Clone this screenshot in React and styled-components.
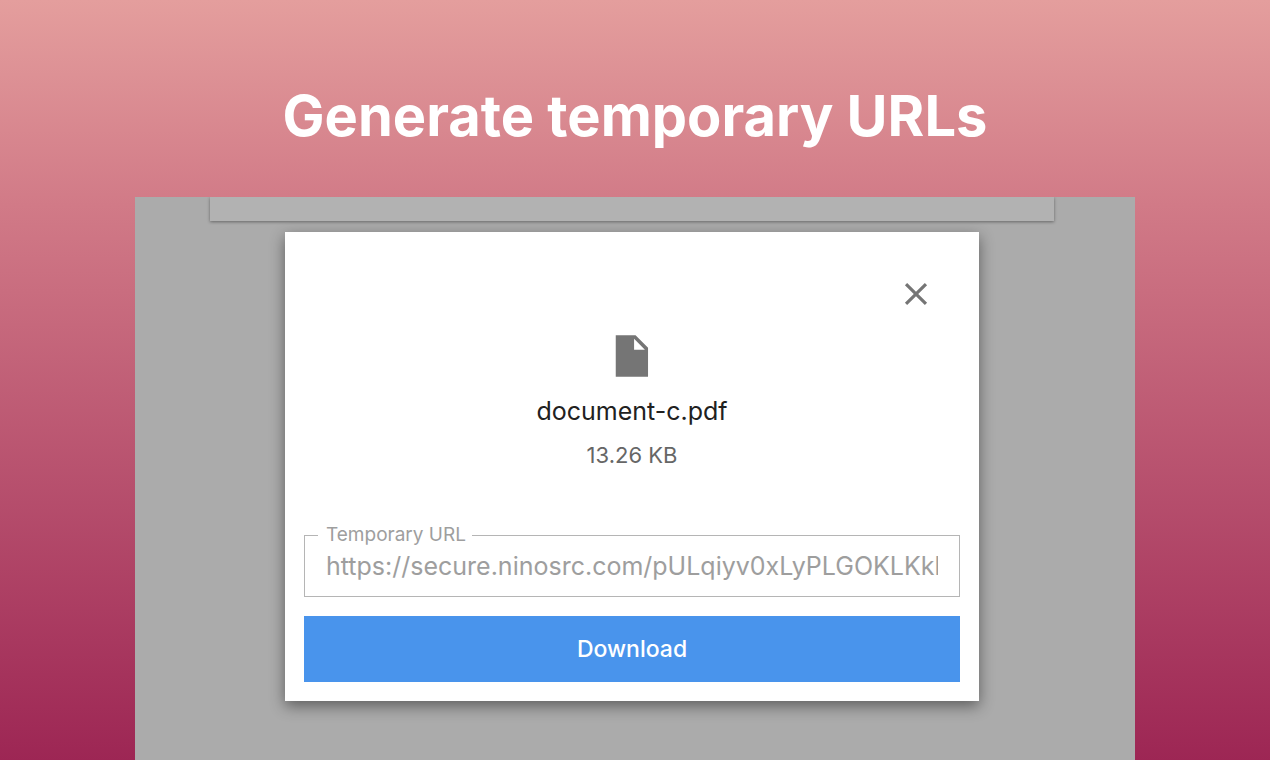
import React, { useState } from "react";
import styled, { createGlobalStyle } from "styled-components";

const App = () => {
  const [open, setOpen] = useState(true);

  return (
    <>
      <GlobalStyle />
      <Page>
        <Title>Generate temporary URLs</Title>
        <Backdrop>
          <Sheet />
          {open && (
            <Dialog role="dialog" aria-label="document-c.pdf">
              <CloseButton aria-label="Close" onClick={() => setOpen(false)}>
                <svg viewBox="0 0 24 24" width="38" height="38">
                  <path d="M19 6.41 17.59 5 12 10.59 6.41 5 5 6.41 10.59 12 5 17.59 6.41 19 12 13.41 17.59 19 19 17.59 13.41 12z" />
                </svg>
              </CloseButton>
              <File>
                <svg viewBox="0 0 24 24" width="50" height="50">
                  <path d="M4.2 2v20h15.5V8l-6-6H4.2zm8.8 7V3.7L18.2 9H13z" />
                </svg>
                <FileName>document-c.pdf</FileName>
                <FileSize>13.26 KB</FileSize>
              </File>
              <Field>
                <legend>
                  <label htmlFor="url">Temporary URL</label>
                </legend>
                <input
                  id="url"
                  type="text"
                  readOnly
                  value="https://secure.ninosrc.com/pULqiyv0xLyPLGOKLKkbTq"
                />
              </Field>
              <DownloadButton>Download</DownloadButton>
            </Dialog>
          )}
        </Backdrop>
      </Page>
    </>
  );
};

export default App;

const GlobalStyle = createGlobalStyle`
  * {
    box-sizing: border-box;
  }

  body {
    margin: 0;
    font-family: Inter, "Liberation Sans", sans-serif;
  }
`;

const Page = styled.main`
  display: flex;
  flex-direction: column;
  min-height: 100vh;
  padding: 80px 135px 0;
  background: linear-gradient(#e49e9d, #d17a87 27%, #9d2654);
`;

const Title = styled.h1`
  margin: 0 0 45px;
  color: #fff;
  font-size: 56px;
  font-weight: 700;
  line-height: 72px;
  text-align: center;
`;

const Backdrop = styled.section`
  flex: 1;
  padding: 0 81px 60px 75px;
  background: #ababab;
`;

const Sheet = styled.div`
  height: 24px;
  margin-bottom: 11px;
  background: #b2b2b2;
  box-shadow: 0 1px 3px rgba(0, 0, 0, 0.4);
  clip-path: inset(0 -4px -4px);
`;

const Dialog = styled.div`
  margin: 0 75px;
  padding: 43px 19px 19px;
  background: #fff;
  box-shadow: 0 5px 14px rgba(0, 0, 0, 0.45);
`;

const CloseButton = styled.button`
  display: block;
  margin: 0 25px 18px auto;
  padding: 0;
  border: 0;
  background: none;
  cursor: pointer;

  svg {
    display: block;
    fill: #757575;
  }
`;

const File = styled.div`
  display: flex;
  flex-direction: column;
  align-items: center;

  svg {
    fill: #757575;
  }
`;

const FileName = styled.div`
  margin-top: 11px;
  color: #212121;
  font-size: 25px;
  line-height: 38px;
`;

const FileSize = styled.div`
  margin-top: 9px;
  color: #666;
  font-size: 22px;
  line-height: 32px;
`;

const Field = styled.fieldset`
  min-width: 0;
  margin: 52px 0 19px;
  padding: 0 21px 11px 13px;
  border: 1px solid #b5b5b5;
  color: #9e9e9e;

  legend {
    padding: 0 6px 0 8px;
    font-size: 19px;
    line-height: 24px;
  }

  input {
    display: block;
    width: 100%;
    height: 38px;
    padding: 0 0 0 8px;
    border: 0;
    outline: 0;
    background: none;
    color: inherit;
    font: inherit;
    font-size: 25px;
  }
`;

const DownloadButton = styled.button`
  display: block;
  width: 100%;
  height: 66px;
  border: 0;
  background: #4994ec;
  color: #fff;
  font-family: inherit;
  font-size: 23px;
  font-weight: 500;
  cursor: pointer;
`;
